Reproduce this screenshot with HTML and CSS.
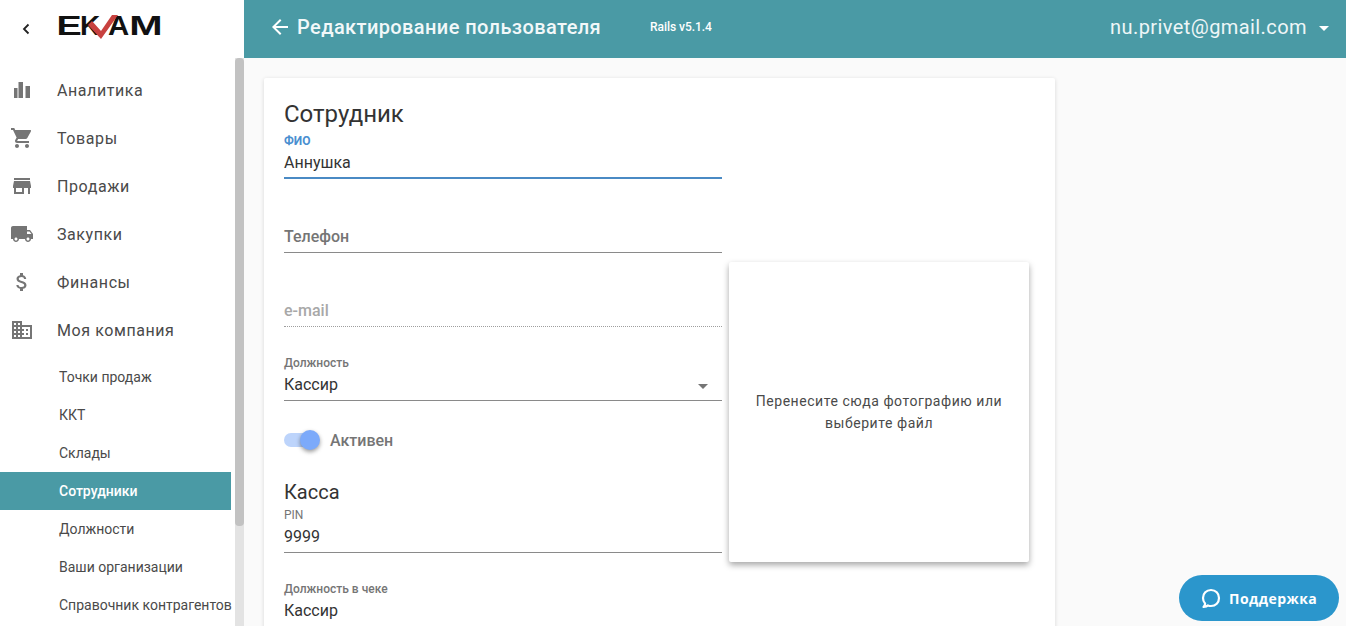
FILE: index.html
```html
<!DOCTYPE html>
<html lang="ru">
<head>
<meta charset="utf-8">
<title>Редактирование пользователя</title>
<link rel="stylesheet" href="styles.css">
</head>
<body>
<div class="app">
  <aside class="sidebar">
    <div class="brand">
      <svg class="back" width="10" height="14" viewBox="0 0 10 14"><path d="M7.500 2.500 3 7l4.500 4.500" fill="none" stroke="#222" stroke-width="1.800"/></svg>
      <svg class="logo" width="104" height="30" viewBox="0 0 104 30">
        <text class="logo-text" transform="translate(-2.600 23) scale(1.350 1)">E</text>
        <text class="logo-text" transform="translate(21 23)">K</text>
        <text class="logo-text" transform="translate(49 23) scale(1.050 1)">A</text>
        <text class="logo-text" transform="translate(70.300 23) scale(1.430 1)">M</text>
        <path d="M29 13l4-4 9 10L53 3h6L42 27z" fill="#c8413f"/>
      </svg>
    </div>
    <div class="side-scroll">
      <nav class="nav">
        <a class="nav-item"><span class="nav-icon"><svg width="24" height="24" viewBox="0 0 24 24"><path d="M4 10h3.500v10H4zM8.500 4H13v16H8.500zm7 4H20v12h-4.500z"/></svg></span>Аналитика</a>
        <a class="nav-item"><span class="nav-icon"><svg width="24" height="24" viewBox="0 0 24 24"><path d="M7 18c-1.100 0-1.990.900-1.990 2S5.900 22 7 22s2-.900 2-2-.900-2-2-2zM1 2v2h2l3.600 7.590-1.350 2.450c-.160.280-.250.610-.250.960 0 1.100.900 2 2 2h12v-2H7.420c-.140 0-.250-.110-.250-.250l.030-.120.900-1.630h7.450c.750 0 1.410-.410 1.750-1.030l3.580-6.490A1 1 0 0 0 20 4H5.210l-.940-2H1zm16 16c-1.100 0-1.990.900-1.990 2s.890 2 1.990 2 2-.900 2-2-.900-2-2-2z"/></svg></span>Товары</a>
        <a class="nav-item"><span class="nav-icon"><svg width="24" height="24" viewBox="0 0 24 24"><path d="M20 4H4v2h16V4zm1 10v-2l-1-5H4l-1 5v2h1v6h10v-6h4v6h2v-6h1zm-9 4H6v-4h6v4z"/></svg></span>Продажи</a>
        <a class="nav-item"><span class="nav-icon"><svg width="24" height="24" viewBox="0 0 24 24"><path d="M20 8h-3V4H3c-1.100 0-2 .900-2 2v11h2c0 1.660 1.340 3 3 3s3-1.340 3-3h6c0 1.660 1.340 3 3 3s3-1.340 3-3h2v-5l-3-4zM6 18.500c-.830 0-1.500-.670-1.500-1.500s.670-1.500 1.500-1.500 1.500.670 1.500 1.500-.670 1.500-1.500 1.500zm13.500-9 1.960 2.500H17V9.500h2.500zm-1.500 9c-.830 0-1.500-.670-1.500-1.500s.670-1.500 1.500-1.500 1.500.670 1.500 1.500-.670 1.500-1.500 1.500z"/></svg></span>Закупки</a>
        <a class="nav-item"><span class="nav-icon"><svg width="24" height="24" viewBox="0 0 24 24"><path d="M11.800 10.900c-2.270-.590-3-1.200-3-2.150 0-1.090 1.010-1.850 2.700-1.850 1.780 0 2.440.850 2.500 2.100h2.210c-.070-1.720-1.120-3.300-3.210-3.810V3h-3v2.160c-1.940.420-3.500 1.680-3.500 3.610 0 2.310 1.910 3.460 4.700 4.130 2.500.600 3 1.480 3 2.410 0 .690-.490 1.790-2.700 1.790-2.060 0-2.870-.920-2.980-2.100h-2.200c.120 2.190 1.760 3.420 3.680 3.830V21h3v-2.150c1.950-.370 3.500-1.500 3.500-3.550 0-2.840-2.430-3.810-4.700-4.400z"/></svg></span>Финансы</a>
        <a class="nav-item"><span class="nav-icon"><svg width="24" height="24" viewBox="0 0 24 24"><path d="M12 7V3H2v18h20V7H12zM6 19H4v-2h2v2zm0-4H4v-2h2v2zm0-4H4V9h2v2zm0-4H4V5h2v2zm4 12H8v-2h2v2zm0-4H8v-2h2v2zm0-4H8V9h2v2zm0-4H8V5h2v2zm10 12h-8v-2h2v-2h-2v-2h2v-2h-2V9h8v10zm-2-8h-2v2h2v-2zm0 4h-2v2h2v-2z"/></svg></span>Моя компания</a>
      </nav>
      <nav class="subnav">
        <a class="sub-item">Точки продаж</a>
        <a class="sub-item">ККТ</a>
        <a class="sub-item">Склады</a>
        <a class="sub-item sub-active">Сотрудники</a>
        <a class="sub-item">Должности</a>
        <a class="sub-item">Ваши организации</a>
        <a class="sub-item">Справочник контрагентов</a>
      </nav>
      <div class="scrollbar"><div class="scroll-thumb"></div></div>
    </div>
  </aside>
  <div class="main">
    <header class="topbar">
      <svg class="top-back" width="24" height="24" viewBox="0 0 24 24"><path d="M20 11H7.830l5.590-5.590L12 4l-8 8 8 8 1.410-1.410L7.830 13H20v-2z"/></svg>
      <h1 class="top-title">Редактирование пользователя</h1>
      <span class="rails">Rails v5.1.4</span>
      <span class="user">nu.privet@gmail.com</span>
      <span class="user-caret"></span>
    </header>
    <main class="content">
      <section class="card">
        <h2 class="card-title">Сотрудник</h2>
        <div class="card-body">
          <form class="form">
            <div class="field field-name">
              <label class="label label-focus">ФИО</label>
              <div class="value">Аннушка</div>
              <div class="line line-focus"></div>
            </div>
            <div class="field field-phone">
              <div class="placeholder">Телефон</div>
              <div class="line"></div>
            </div>
            <div class="field field-mail">
              <div class="placeholder placeholder-off">e-mail</div>
              <div class="line-dotted"></div>
            </div>
            <div class="field field-role">
              <label class="label">Должность</label>
              <div class="value value-select">Кассир<span class="select-caret"></span></div>
              <div class="line"></div>
            </div>
            <div class="toggle-row">
              <span class="toggle"><span class="toggle-knob"></span></span>
              <span class="toggle-label">Активен</span>
            </div>
            <h3 class="section-title">Касса</h3>
            <div class="field field-pin">
              <label class="label label-thin">PIN</label>
              <div class="value">9999</div>
              <div class="line"></div>
            </div>
            <div class="field field-receipt">
              <label class="label">Должность в чеке</label>
              <div class="value">Кассир</div>
            </div>
          </form>
          <div class="dropzone">Перенесите сюда фотографию или выберите файл</div>
        </div>
      </section>
    </main>
  </div>
</div>
<button class="support">
  <svg class="support-icon" width="24" height="24" viewBox="0 0 24 24"><path d="M4.500 21c2.300-.2 3.700-.8 4.500-1.600 1 .4 2 .6 3 .6 4.700 0 8-3.400 8-8s-3.300-8-8-8-8 3.400-8 8c0 2.200.8 4.100 2.100 5.500.1 1.200-.5 2.400-1.600 3.500z" fill="none" stroke="#fff" stroke-width="2.200" stroke-linejoin="round"/></svg>
  Поддержка
</button>
</body>
</html>
```
FILE: styles.css
```css
* { box-sizing: border-box; }
html, body { margin: 0; height: 100%; overflow: hidden; }
body { font-family: Roboto, "Noto Sans", sans-serif; color: #212121; background: #fafafa; }
.app { display: flex; height: 626px; overflow: hidden; }

.sidebar { width: 244px; flex: none; background: #fff; display: flex; flex-direction: column; }
.brand { height: 58px; flex: none; display: flex; align-items: center; padding-left: 21px; }
.back { margin-right: 28px; }
.logo { margin-top: -4px; display: block; overflow: visible; }
.logo-text { font-family: "Liberation Sans", sans-serif; font-weight: 700; font-size: 28px; fill: #111; }
.side-scroll { position: relative; flex: 1; padding-top: 8px; }
.scrollbar { position: absolute; top: 0; bottom: 0; left: 235px; width: 9px; background: #e3e3e3; }
.scroll-thumb { height: 468px; background: #c2c2c2; border-radius: 4px; }
.nav-item { display: flex; align-items: center; height: 48px; font-size: 16px; color: #4a4a4a; letter-spacing: .58px; }
.nav-icon { width: 57px; padding-left: 10px; display: flex; letter-spacing: 0; }
.nav-icon svg { fill: #757575; }
.subnav { padding-top: 4px; }
.sub-item { display: flex; align-items: center; height: 38px; width: 231px; padding-left: 59px; font-size: 14px; color: #4a4a4a; white-space: nowrap; }
.sub-active { background: #4a9aa5; color: #fff; font-weight: 500; }

.main { flex: 1; min-width: 0; display: flex; flex-direction: column; }
.topbar { height: 58px; flex: none; background: #4a9aa5; color: #fff; display: flex; align-items: center; padding: 0 0 4px 24px; }
.top-back { fill: #fff; margin-right: 5px; }
.top-title { margin: 0; font-size: 20px; font-weight: 500; letter-spacing: .4px; color: #f2f8f9; width: 353px; white-space: nowrap; }
.rails { font-size: 12px; font-weight: 500; letter-spacing: -.05px; }
.user { margin-left: auto; font-size: 20px; letter-spacing: .42px; color: #eef6f7; }
.user-caret { margin: 2px 17px 0 12px; border: 5px solid transparent; border-top-color: #fff; border-bottom: 0; }

.content { flex: 1; padding: 20px; }
.card { width: 791px; height: 600px; background: #fff; border-radius: 2px; padding: 20px; box-shadow: 0 1px 4px rgba(0,0,0,.14); }
.card-title { margin: 0; font-size: 24px; font-weight: 400; line-height: 32px; color: #333; }
.card-body { display: flex; gap: 7px; align-items: flex-start; }
.form { width: 438px; flex: none; }
.field { position: relative; }
.label { display: block; font-size: 12px; line-height: 14px; margin-bottom: 3px; font-weight: 500; color: #757575; }
.label-focus { color: #4a8fd0; margin-top: 4px; font-weight: 700; }
.label-thin { font-weight: 400; }
.value { font-size: 16px; line-height: 24px; padding-bottom: 3px; color: #333; position: relative; }
.line { height: 1px; background: #8a8a8a; }
.line-focus { height: 2px; background: #4a8ac4; margin-top: -1px; }
.line-dotted { border-top: 1px dotted #9e9e9e; height: 1px; }
.placeholder { font-size: 16px; line-height: 24px; padding-bottom: 3px; font-weight: 500; color: #757575; }
.placeholder-off { color: #a8a8a8; }
.field-phone { margin-top: 46px; }
.field-mail { margin-top: 46px; }
.field-role { margin-top: 29px; }
.select-caret { position: absolute; right: 14px; top: 11px; border: 5px solid transparent; border-top-color: #757575; border-bottom: 0; }
.toggle-row { display: flex; align-items: center; margin-top: 27px; height: 24px; }
.toggle { position: relative; width: 34px; height: 14px; border-radius: 7px; background: #bdd4fb; margin-right: 12px; }
.toggle-knob { position: absolute; left: 16px; top: -3px; width: 20px; height: 20px; border-radius: 50%; background: #7caafa; box-shadow: 0 2px 4px rgba(0,0,0,.4); }
.toggle-label { font-size: 16px; font-weight: 500; color: #757575; }
.section-title { margin: 28px 0 0; font-size: 20px; line-height: 24px; font-weight: 400; color: #333; }
.field-pin { margin-top: 4px; }
.field-receipt { margin-top: 29px; }
.dropzone { width: 300px; height: 300px; margin-top: 132px; flex: none; display: flex; align-items: center; justify-content: center; text-align: center; padding: 0 20px; font-size: 14px; line-height: 22px; color: #4a4a4a; background: #fff; box-shadow: 0 3px 6px rgba(0,0,0,.35); border-radius: 2px; letter-spacing: .55px; }

.support { position: fixed; right: 7px; bottom: 5px; width: 160px; height: 46px; border: 0; border-radius: 23px; background: #2b96cc; color: #fff; font-family: "Open Sans", sans-serif; font-size: 14px; font-weight: 700; letter-spacing: .45px; display: flex; align-items: center; padding: 0 0 0 20px; gap: 6px; }
.support-icon { flex: none; }
```
